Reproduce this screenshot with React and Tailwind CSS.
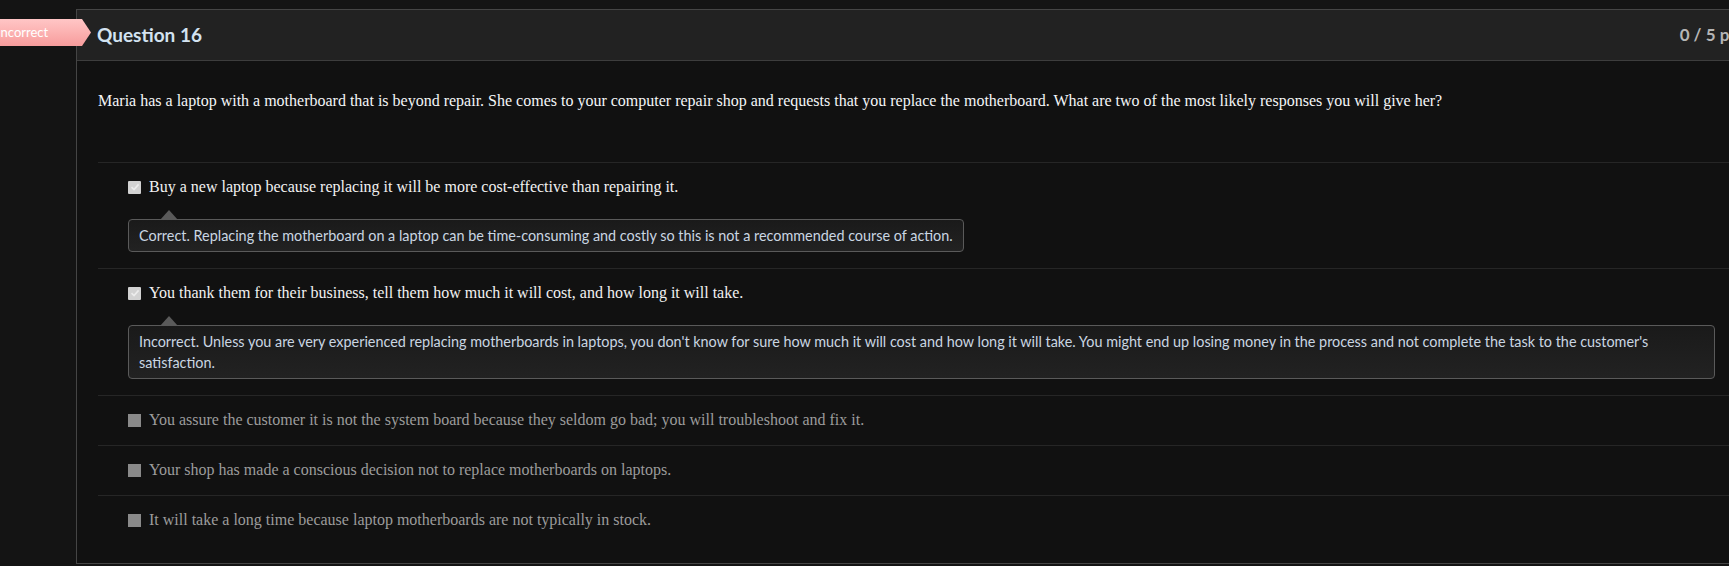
import React from "react";

const answers = [
  {
    text: "Buy a new laptop because replacing it will be more cost-effective than repairing it.",
    checked: true,
    feedback:
      "Correct. Replacing the motherboard on a laptop can be time-consuming and costly so this is not a recommended course of action.",
  },
  {
    text: "You thank them for their business, tell them how much it will cost, and how long it will take.",
    checked: true,
    feedback:
      "Incorrect. Unless you are very experienced replacing motherboards in laptops, you don't know for sure how much it will cost and how long it will take. You might end up losing money in the process and not complete the task to the customer's satisfaction.",
  },
  {
    text: "You assure the customer it is not the system board because they seldom go bad; you will troubleshoot and fix it.",
    checked: false,
  },
  {
    text: "Your shop has made a conscious decision not to replace motherboards on laptops.",
    checked: false,
  },
  {
    text: "It will take a long time because laptop motherboards are not typically in stock.",
    checked: false,
  },
];

function Checkbox({ checked }) {
  if (checked) {
    return (
      <span className="flex h-[13px] w-[13px] shrink-0 items-center justify-center rounded-[1px] bg-[#d2d2d2]">
        <svg width="10" height="10" viewBox="0 0 10 10">
          <path d="M1.5 5.2 L4 7.6 L8.6 2.4" fill="none" stroke="#ececec" strokeWidth="1.6" />
        </svg>
      </span>
    );
  }
  return <span className="h-[13px] w-[13px] shrink-0 bg-[#8a8a8a]" />;
}

function Answer({ a }) {
  return (
    <div
      className={
        "border-t border-[#262626] pl-[30px] pr-[30px] pt-[14px] " + (a.feedback ? "pb-[16px]" : "pb-[15px]")
      }
    >
      <div className="flex h-[20px] items-center gap-[8px]">
        <Checkbox checked={a.checked} />
        <span
          className={
            "font-['Liberation_Serif','Times_New_Roman',serif] text-[16px] leading-[20px] " +
            (a.checked ? "text-[#f2f2f2]" : "text-[#9c9c9c]")
          }
        >
          {a.text}
        </span>
      </div>
      {a.feedback && (
        <div className="relative mt-[22px] w-fit rounded-[4px] border border-[#5a5a5a] bg-gradient-to-b from-[#1a1a1a] to-[#222222] px-[10px] py-[5px] text-[14.4px] leading-[21px] text-[#cad6e2]">
          <span className="absolute left-[31px] top-[-10px] h-0 w-0 border-x-[9px] border-b-[10px] border-x-transparent border-b-[#5a5a5a]" />
          {a.feedback}
        </div>
      )}
    </div>
  );
}

export default function App() {
  return (
    <div className="relative h-[566px] w-[1729px] overflow-hidden bg-[#141414] font-['Lato','Liberation_Sans',sans-serif]">
      <div className="flex pt-[9px]">
        <div className="w-[76px] shrink-0" />
        <div className="w-[1690px] shrink-0 border border-r-0 border-[#454545] bg-[#111111]">
          <div className="flex h-[51px] items-center justify-between border-b border-[#3d3d3d] bg-[#222222] pl-[20px] pr-[23px]">
            <h2 className="text-[19px] font-bold text-[#d3e3f1]">Question 16</h2>
            <span className="text-[17px] font-bold text-[#b5b5b5]">0 / 5 pts</span>
          </div>
          <div className="px-[21px] pt-[30px] pb-[18px]">
            <p className="mb-[51px] font-['Liberation_Serif','Times_New_Roman',serif] text-[16px] leading-[20px] text-[#f4f6f8]">
              Maria has a laptop with a motherboard that is beyond repair. She comes to your computer repair shop and
              requests that you replace the motherboard. What are two of the most likely responses you will give her?
            </p>
            <div>
              {answers.map((a, i) => (
                <Answer key={i} a={a} />
              ))}
            </div>
          </div>
        </div>
      </div>
      <div className="absolute left-[-10px] top-[19px] flex h-[27px] w-[101px] items-center bg-gradient-to-b from-[#ffc6c6] to-[#f79c9c] pl-[7px] text-[13px] text-white [clip-path:polygon(0_0,calc(100%-9px)_0,100%_50%,calc(100%-9px)_100%,0_100%)]">
        Incorrect
      </div>
    </div>
  );
}
